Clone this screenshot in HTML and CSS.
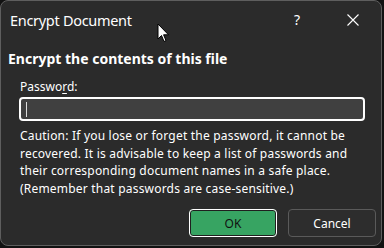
FILE: index.html
```html
<!DOCTYPE html>
<html>
<head>
<meta charset="utf-8">
<link rel="stylesheet" href="styles.css">
</head>
<body>
<div class="dialog">
  <div class="titlebar">
    <span class="title">Encrypt Document</span>
    <span class="help">?</span>
    <span class="close">
      <svg width="12" height="12" viewBox="0 0 12 12"><path d="M0.5 0.5 L11.5 11.5 M11.5 0.5 L0.5 11.5" stroke="#fff" stroke-width="1.1" fill="none"/></svg>
    </span>
  </div>
  <div class="heading">Encrypt the contents of this file</div>
  <div class="content">
    <label class="label">Passwo<u>r</u>d:</label>
    <div class="input"><span class="caret"></span></div>
    <p class="caution">Caution: If you lose or forget the password, it cannot be recovered. It is advisable to keep a list of passwords and their corresponding document names in a safe place. (Remember that passwords are case-sensitive.)</p>
  </div>
  <div class="buttons">
    <button class="btn ok">OK</button>
    <button class="btn cancel">Cancel</button>
  </div>
  <svg class="pointer" width="13" height="20" viewBox="0 0 13 20"><path d="M1 1 L1 16 L4.5 12.5 L7 18.5 L9 17.6 L6.6 11.8 L11.5 11.8 Z" fill="#fff" stroke="#000" stroke-width="1"/></svg>
</div>
</body>
</html>
```
FILE: styles.css
```css
html, body {
  margin: 0;
  padding: 0;
  background: #121212;
}
body {
  width: 384px;
  height: 248px;
  overflow: hidden;
  font-family: "Noto Sans", "Open Sans", sans-serif;
  color: #fff;
}
.dialog {
  position: relative;
  box-sizing: border-box;
  width: 382px;
  height: 246px;
  border: 1px solid #5e5e5e;
  border-radius: 8px;
  background: #2b2b2b;
  display: flex;
  flex-direction: column;
}
.titlebar {
  display: flex;
  align-items: center;
  height: 37px;
  padding: 0 0 0 9px;
}
.title {
  font-size: 14.5px;
  flex: 1;
  letter-spacing: -0.3px;
}
.help {
  font-size: 14px;
  width: 10px;
  margin-right: 43px;
}
.close {
  display: flex;
  width: 12px;
  margin-right: 22px;
}
.heading {
  font-weight: bold;
  font-size: 14px;
  padding-left: 7px;
  margin-top: 11px;
  line-height: 19px;
}
.content {
  padding: 0 16px 0 18px;
  margin-top: 11px;
  font-size: 12px;
}
.label {
  display: block;
  padding-left: 1px;
  line-height: 16px;
}
.label u {
  text-decoration-thickness: 1px;
  text-underline-offset: 2px;
}
.input {
  margin-top: 2px;
  box-sizing: border-box;
  height: 24px;
  border: 2px solid #fff;
  border-radius: 4px;
  background: #404040;
  display: flex;
  align-items: center;
  padding-left: 5px;
}
.caret {
  width: 1px;
  height: 15px;
  background: #ddd;
}
.caution {
  margin: 6px 0 0 1px;
  line-height: 17.5px;
  letter-spacing: 0.2px;
}
.buttons {
  display: flex;
  justify-content: flex-end;
  gap: 11px;
  margin-top: auto;
  padding: 0 5px 8px 0;
}
.btn {
  width: 88px;
  height: 28px;
  border-radius: 4px;
  font-family: "Noto Sans", "Open Sans", sans-serif;
  font-size: 12px;
  padding: 0;
}
.ok {
  background: #37a462;
  color: #111;
  border: 1px solid #fff;
  box-shadow: inset 0 0 0 1px #1f1f1f;
}
.cancel {
  background: #2d2d2d;
  color: #fff;
  border: 1px solid #5a5a5a;
}
.pointer {
  position: absolute;
  left: 156px;
  top: 22px;
}
```
